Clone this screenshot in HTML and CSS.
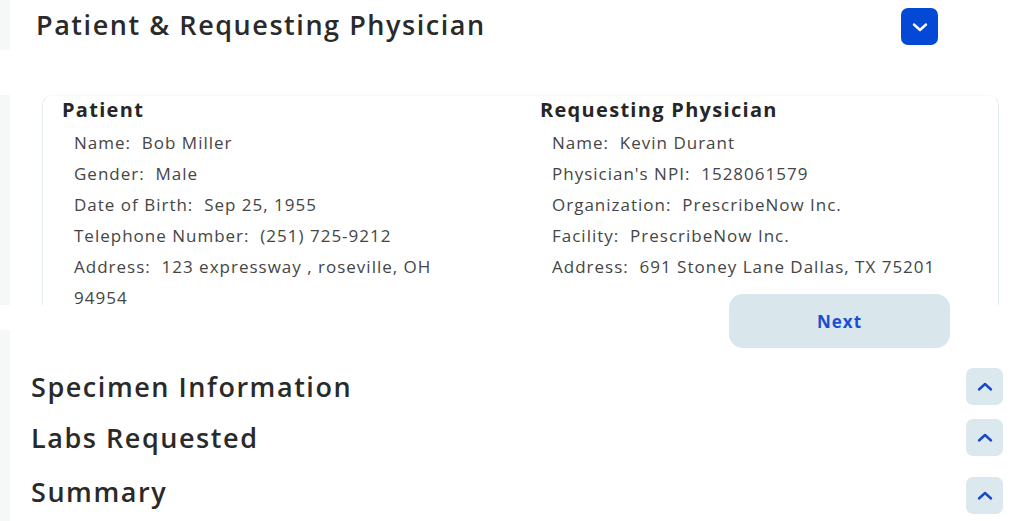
FILE: index.html
```html
<!DOCTYPE html>
<html lang="en">
<head>
<meta charset="utf-8">
<title>Patient &amp; Requesting Physician</title>
<link rel="stylesheet" href="styles.css">
</head>
<body>
<main class="page">
  <section class="block header-block">
    <h2 class="section-title main-title">Patient &amp; Requesting Physician</h2>
    <button class="toggle toggle-open" aria-label="Collapse">
      <svg viewBox="0 0 18 18" width="18" height="18"><path d="M3 6.5 L9 12 L15 6.5" fill="none" stroke="#fff" stroke-width="2.4" stroke-linecap="round" stroke-linejoin="round"/></svg>
    </button>
  </section>

  <section class="block card-block">
    <div class="card">
      <div class="col col-patient">
        <h3 class="col-title">Patient</h3>
        <ul class="fields">
          <li>Name:&nbsp; Bob Miller</li>
          <li>Gender:&nbsp; Male</li>
          <li>Date of Birth:&nbsp; Sep 25, 1955</li>
          <li>Telephone Number:&nbsp; (251) 725-9212</li>
          <li>Address:&nbsp; 123 expressway , roseville, OH 94954</li>
        </ul>
      </div>
      <div class="col col-physician">
        <h3 class="col-title">Requesting Physician</h3>
        <ul class="fields">
          <li>Name:&nbsp; Kevin Durant</li>
          <li>Physician's NPI:&nbsp; 1528061579</li>
          <li>Organization:&nbsp; PrescribeNow Inc.</li>
          <li>Facility:&nbsp; PrescribeNow Inc.</li>
          <li>Address:&nbsp; 691 Stoney Lane Dallas, TX 75201</li>
        </ul>
      </div>
    </div>
  </section>

  <div class="next-row">
    <button class="next-btn">Next</button>
  </div>

  <section class="block lower-block">
    <div class="acc-row row-specimen">
      <h2 class="section-title">Specimen Information</h2>
      <button class="toggle toggle-closed" aria-label="Expand">
        <svg viewBox="0 0 18 18" width="18" height="18"><path d="M3 11.5 L9 6 L15 11.5" fill="none" stroke="#1747d0" stroke-width="2.4" stroke-linecap="round" stroke-linejoin="round"/></svg>
      </button>
    </div>
    <div class="acc-row row-labs">
      <h2 class="section-title">Labs Requested</h2>
      <button class="toggle toggle-closed" aria-label="Expand">
        <svg viewBox="0 0 18 18" width="18" height="18"><path d="M3 11.5 L9 6 L15 11.5" fill="none" stroke="#1747d0" stroke-width="2.4" stroke-linecap="round" stroke-linejoin="round"/></svg>
      </button>
    </div>
    <div class="acc-row row-summary">
      <h2 class="section-title">Summary</h2>
      <button class="toggle toggle-closed" aria-label="Expand">
        <svg viewBox="0 0 18 18" width="18" height="18"><path d="M3 11.5 L9 6 L15 11.5" fill="none" stroke="#1747d0" stroke-width="2.4" stroke-linecap="round" stroke-linejoin="round"/></svg>
      </button>
    </div>
  </section>
</main>
</body>
</html>
```

FILE: styles.css
```css
* { box-sizing: border-box; }

html, body {
  margin: 0;
  padding: 0;
  background: #ffffff;
}

body {
  font-family: "Open Sans", "DejaVu Sans", sans-serif;
  color: #2c2c2c;
  width: 1010px;
  height: 521px;
  overflow: hidden;
}

.page {
  display: flex;
  flex-direction: column;
}

.block {
  border-left: 10px solid #f6f8f8;
}

button {
  font-family: inherit;
  border: none;
  cursor: pointer;
  padding: 0;
}

.section-title {
  margin: 0;
  font-size: 27px;
  font-weight: 600;
  color: #2a2a2a;
  line-height: 1;
  letter-spacing: 1.55px;
}

/* header */
.header-block {
  height: 50px;
  display: flex;
  align-items: flex-start;
  justify-content: space-between;
  padding: 8px 72px 0 26px;
}

.main-title {
  margin-top: 3px;
}

.toggle {
  width: 37px;
  height: 37px;
  border-radius: 7px;
  display: flex;
  align-items: center;
  justify-content: center;
  flex-shrink: 0;
}

.toggle-open {
  background: #0449d6;
}

.toggle-closed {
  background: #dbe8ee;
}

/* card */
.card-block {
  margin-top: 45px;
  height: 210px;
  overflow: hidden;
  padding-left: 32px;
  padding-right: 11px;
}

.card {
  height: 230px;
  border: 1.5px solid #e2ecf0;
  border-top-color: #f6f9fb;
  border-radius: 10px 10px 0 0;
  display: grid;
  grid-template-columns: 478px 1fr;
  padding: 0 0 0 19px;
}

.col-title {
  margin: 0;
  font-size: 20px;
  font-weight: 700;
  color: #262626;
  line-height: 28px;
  letter-spacing: 1.3px;
}

.fields {
  list-style: none;
  margin: 3px 0 0;
  padding: 0 0 0 12px;
  font-size: 17px;
  line-height: 31px;
  color: #454545;
  letter-spacing: 1px;
}

.col-patient .fields {
  width: 400px;
}

/* next */
.next-row {
  margin-top: -11px;
  height: 54px;
  display: flex;
  padding-left: 729px;
}

.next-btn {
  width: 221px;
  height: 54px;
  border-radius: 14px;
  background: #d9e7ed;
  color: #1b4ed2;
  font-size: 17px;
  font-weight: 700;
  letter-spacing: 1px;
}

/* lower accordion */
.lower-block {
  margin-top: -18px;
  padding: 38px 7px 0 21px;
  height: 191px;
  display: flex;
  flex-direction: column;
}

.acc-row {
  display: flex;
  align-items: center;
  justify-content: space-between;
  height: 37px;
}

.row-labs {
  margin-top: 14px;
}

.row-summary {
  margin-top: 21px;
  height: 37px;
}

.row-summary .section-title {
  margin-bottom: 9px;
}
```
